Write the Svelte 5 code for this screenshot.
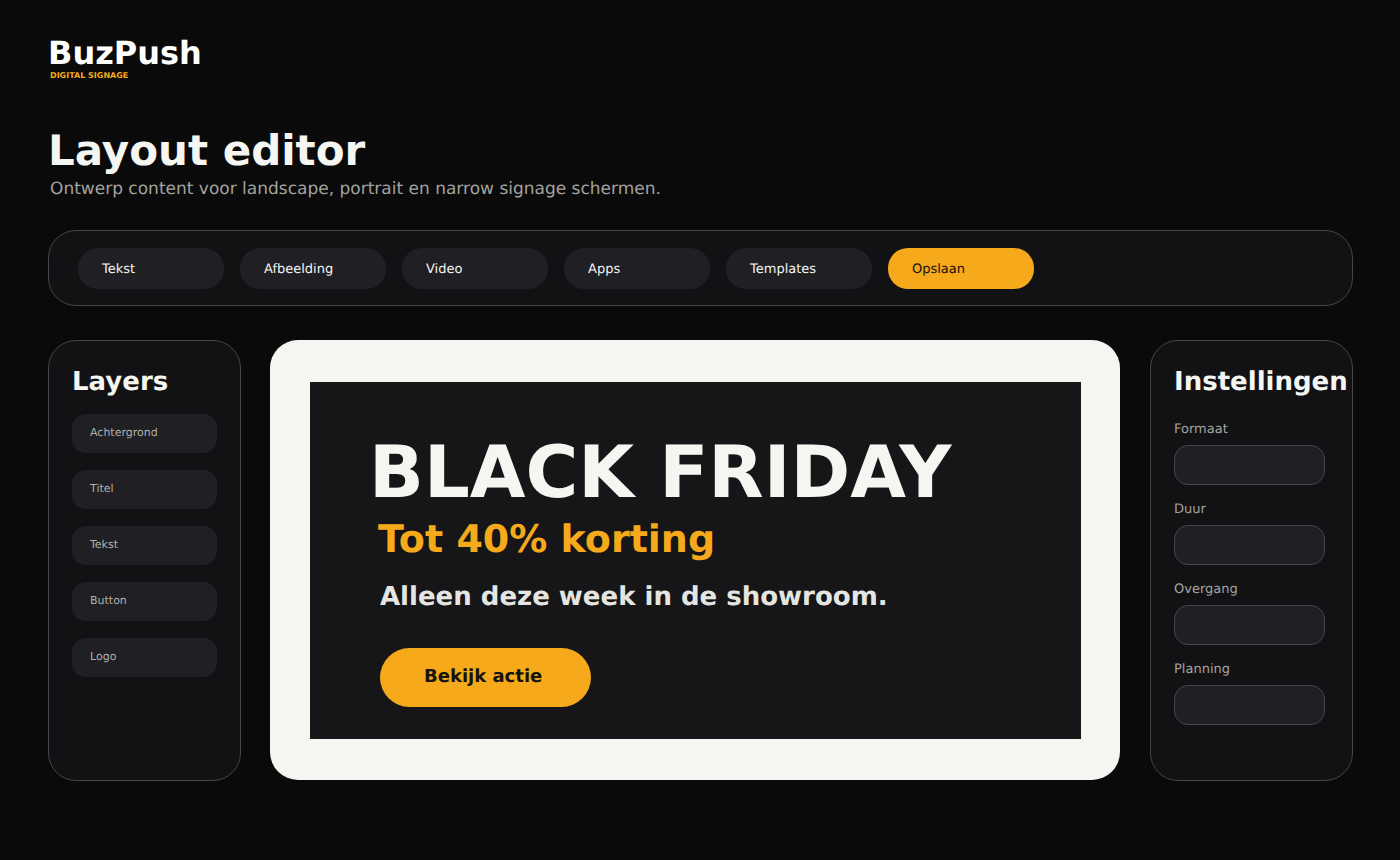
<script>
  const tools = ['Tekst', 'Afbeelding', 'Video', 'Apps', 'Templates'];
  const layers = ['Achtergrond', 'Titel', 'Tekst', 'Button', 'Logo'];
  const settings = ['Formaat', 'Duur', 'Overgang', 'Planning'];
</script>

<div class="page">
  <div class="brand">
    <div class="logo">BuzPush</div>
    <div class="tag">DIGITAL SIGNAGE</div>
  </div>
  <h1>Layout editor</h1>
  <p class="sub">Ontwerp content voor landscape, portrait en narrow signage schermen.</p>

  <div class="toolbar">
    {#each tools as t}
      <div class="tool">{t}</div>
    {/each}
    <div class="tool save">Opslaan</div>
  </div>

  <div class="work">
    <aside class="panel layers">
      <h2>Layers</h2>
      {#each layers as l}
        <div class="layer">{l}</div>
      {/each}
    </aside>

    <main class="canvas">
      <div class="screen">
        <div class="title">BLACK FRIDAY</div>
        <div class="deal">Tot 40% korting</div>
        <div class="note">Alleen deze week in de showroom.</div>
        <div class="cta">Bekijk actie</div>
      </div>
    </main>

    <aside class="panel settings">
      <h2>Instellingen</h2>
      {#each settings as s}
        <div class="field">
          <div class="label">{s}</div>
          <div class="input"></div>
        </div>
      {/each}
    </aside>
  </div>
</div>

<style>
  :global(body) {
    margin: 0;
    background: #0a0a0b;
  }
  .page {
    height: 860px;
    box-sizing: border-box;
    padding: 32px 47px 0 48px;
    font-family: "DejaVu Sans", sans-serif;
    text-rendering: geometricPrecision;
    color: #f5f5f2;
    overflow: hidden;
  }
  .brand {
    height: 66px;
  }
  .logo {
    font-size: 32px;
    font-weight: 700;
    line-height: 42px;
    color: #fff;
  }
  .tag {
    font-size: 8px;
    font-weight: 700;
    line-height: 10px;
    margin-left: 2px;
    margin-top: -3px;
    color: #f5a91b;
  }
  h1 {
    margin: 26px 0 0;
    font-size: 42px;
    line-height: 53px;
    font-weight: 700;
  }
  .sub {
    margin: 1px 0 0 2px;
    font-size: 17px;
    line-height: 22px;
    color: #a3a39f;
  }
  .toolbar {
    margin-top: 30px;
    height: 76px;
    box-sizing: border-box;
    padding: 0 29px;
    display: flex;
    align-items: center;
    gap: 16px;
    background: #121215;
    border: 1px solid #46464a;
    border-radius: 28px;
  }
  .tool {
    width: 146px;
    height: 41px;
    box-sizing: border-box;
    padding: 2px 24px 0;
    display: flex;
    align-items: center;
    background: #1f1f24;
    border-radius: 20px;
    font-size: 13px;
    color: #f5f5f2;
  }
  .tool.save {
    background: #f5a91b;
    color: #17120a;
  }
  .work {
    margin-top: 34px;
    display: grid;
    grid-template-columns: 193px 851px 203px;
    gap: 29px;
    height: 441px;
  }
  .panel {
    box-sizing: border-box;
    background: #121215;
    border: 1px solid #46464a;
    border-radius: 28px;
    padding: 24px 23px 0;
  }
  h2 {
    margin: 0;
    font-size: 26px;
    line-height: 34px;
    font-weight: 700;
    white-space: nowrap;
  }
  .layers h2 {
    margin-bottom: 15px;
  }
  .layer {
    height: 39px;
    margin-bottom: 17px;
    padding: 0 18px 2px;
    box-sizing: border-box;
    display: flex;
    align-items: center;
    background: #1f1f24;
    border-radius: 14px;
    font-size: 11px;
    color: #b0b0ac;
  }
  .settings h2 {
    margin-bottom: 22px;
  }
  .field {
    height: 80px;
  }
  .label {
    font-size: 13px;
    line-height: 17px;
    color: #a3a39f;
  }
  .input {
    margin-top: 7px;
    width: 151px;
    height: 40px;
    box-sizing: border-box;
    background: #1f1f24;
    border: 1px solid #46464a;
    border-radius: 14px;
  }
  .canvas {
    width: 850px;
    height: 440px;
    box-sizing: border-box;
    padding: 42px 39px 41px 40px;
    background: #f5f5f2;
    border-radius: 28px;
    display: flex;
  }
  .screen {
    flex: 1;
    position: relative;
    background: #161619;
  }
  .screen > div {
    position: absolute;
    white-space: nowrap;
  }
  .title {
    left: 59px;
    top: 46px;
    font-size: 72px;
    line-height: 88px;
    font-weight: 700;
    color: #f5f5f2;
  }
  .deal {
    left: 68px;
    top: 133px;
    font-size: 38px;
    line-height: 48px;
    font-weight: 700;
    color: #f5a91b;
  }
  .note {
    left: 70px;
    top: 198px;
    font-size: 26px;
    line-height: 34px;
    font-weight: 700;
    color: #e5e5e1;
  }
  .cta {
    left: 70px;
    top: 266px;
    width: 211px;
    height: 59px;
    box-sizing: border-box;
    padding: 0 44px 2px;
    display: flex;
    align-items: center;
    background: #f5a91b;
    border-radius: 30px;
    font-size: 18px;
    font-weight: 700;
    color: #17120a;
  }
</style>
